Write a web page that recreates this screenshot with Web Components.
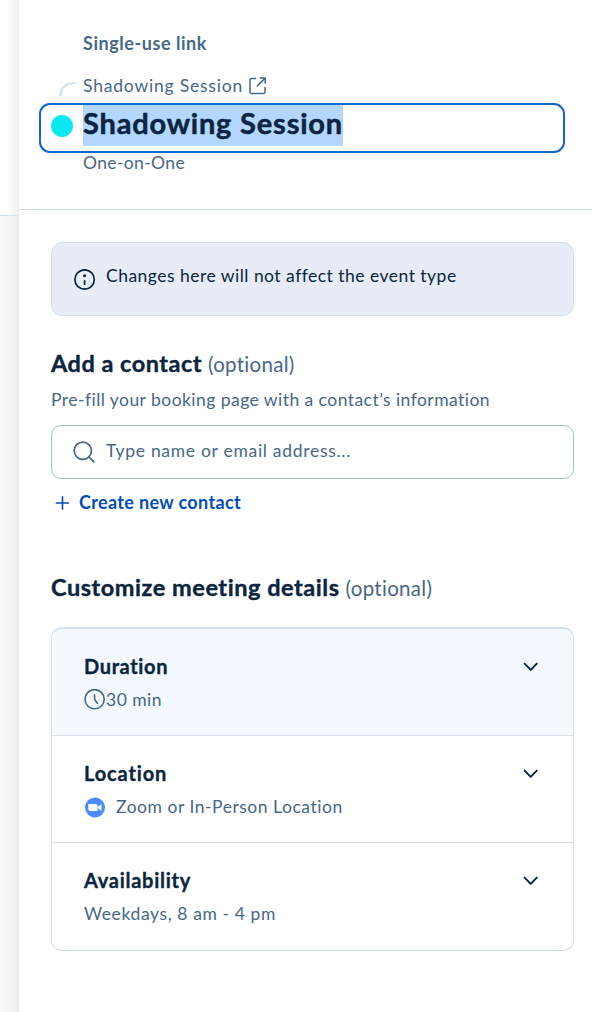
<!DOCTYPE html>
<html lang="en">
<head>
<meta charset="utf-8">
<title>Single-use link</title>
<style>
  body {
    margin: 0;
    background: #fff;
    color: #0b2540;
    font-family: Lato, "Open Sans", "Liberation Sans", sans-serif;
    overflow: hidden;
  }
</style>
</head>
<body>
<share-panel>
  <link-header slot="header" name="Shadowing Session"></link-header>
  <info-banner><fit-text w="350">Changes here will not affect the event type</fit-text></info-banner>
  <section-title style="margin-top:32px"><fit-text w="151">Add a contact</fit-text><fit-text slot="note" w="87">(optional)</fit-text></section-title>
  <contact-search></contact-search>
  <section-title style="margin-top:58px"><fit-text w="289">Customize meeting details</fit-text><fit-text slot="note" w="87">(optional)</fit-text></section-title>
  <detail-list>
    <detail-row active>
      <fit-text slot="title" w="84.5">Duration</fit-text>
      <ui-icon slot="icon" name="clock"></ui-icon>
      <fit-text w="56">30 min</fit-text>
    </detail-row>
    <detail-row>
      <fit-text slot="title" w="83.5">Location</fit-text>
      <ui-icon slot="icon" name="zoom" style="margin-right:10px"></ui-icon>
      <fit-text w="227">Zoom or In-Person Location</fit-text>
    </detail-row>
    <detail-row>
      <fit-text slot="title" w="107">Availability</fit-text>
      <fit-text w="192">Weekdays, 8 am - 4 pm</fit-text>
    </detail-row>
  </detail-list>
</share-panel>

<script>
const icons = {
  external: `<svg width="18" height="18" viewBox="0 0 18 18" fill="none" stroke="#476788" stroke-width="1.5" stroke-linecap="round" stroke-linejoin="round"><path d="M6.6 1.4H2.6A1.6 1.6 0 0 0 1 3V15A1.6 1.6 0 0 0 2.6 16.6H14.4A1.6 1.6 0 0 0 16 15V10.6M8.4 8.9 16 1.3M11.2 1H16.2V6"/></svg>`,
  info: `<svg width="22" height="22" viewBox="0 0 22 22" fill="none" stroke="#0b2540" stroke-width="1.7" stroke-linecap="round"><circle cx="10.6" cy="10.5" r="9.7"/><path d="M10.6 11.9V15.2"/><circle cx="10.6" cy="6.8" r="1.5" fill="#0b2540" stroke="none"/></svg>`,
  search: `<svg width="22" height="22" viewBox="0 0 22 22" fill="none" stroke="#476788" stroke-width="1.7" stroke-linecap="round"><circle cx="9.8" cy="9.8" r="8.6"/><path d="M16 16 20.8 20.8"/></svg>`,
  plus: `<svg width="14" height="14" viewBox="0 0 14 14" fill="none" stroke="#004eba" stroke-width="1.6" stroke-linecap="round"><path d="M7.5 .9V13.1M1.3 7H13.4"/></svg>`,
  clock: `<svg width="22" height="22" viewBox="0 0 22 22" fill="none" stroke="#476788" stroke-width="1.6" stroke-linecap="round" stroke-linejoin="round"><circle cx="10.6" cy="10.2" r="9.6"/><path d="M10.6 6V10.4L13.6 14.4"/></svg>`,
  zoom: `<svg width="22" height="22" viewBox="0 0 22 22"><circle cx="11" cy="11.5" r="10" fill="#4a8cff"/><path fill="#fff" d="M4.3 8H11.6A2 2 0 0 1 13.6 10V15H6.3A2 2 0 0 1 4.3 13ZM14.2 10.4 17.5 8V15L14.2 12.6Z"/></svg>`,
  chevron: `<svg width="16" height="10" viewBox="0 0 16 10" fill="none" stroke="#0b2540" stroke-width="1.9" stroke-linecap="round" stroke-linejoin="round"><path d="M2.6 1.6 8.7 7.9 14.8 1.6"/></svg>`,
};

// Shared base: clones a template string into an open shadow root
function define(name, html, setup) {
  const template = document.createElement('template');
  template.innerHTML = html;
  customElements.define(name, class extends HTMLElement {
    constructor() {
      super();
      this.attachShadow({ mode: 'open' }).appendChild(template.content.cloneNode(true));
    }
    connectedCallback() { if (setup) setup(this, this.shadowRoot); }
  });
}

define('ui-icon', `
  <style>
    :host { display: inline-flex; flex: none; }
    svg { display: block; }
  </style>
  <span></span>
`, (el, root) => { root.querySelector('span').innerHTML = icons[el.getAttribute('name')]; });

// Tracks a single line of text so it runs to the given width
define('fit-text', `
  <style>:host { display: inline-block; white-space: nowrap; }</style>
  <slot></slot>
`, (el) => {
  const w = Number(el.getAttribute('w'));
  requestAnimationFrame(() => {
    const gap = (w - el.getBoundingClientRect().width) / el.textContent.length;
    el.style.letterSpacing = gap.toFixed(3) + 'px';
  });
});

define('share-panel', `
  <style>
    :host { display: flex; height: 1012px; }
    .page { width: 19px; flex: none; display: flex; flex-direction: column; }
    .page div { flex: 1; background: linear-gradient(90deg, #f8f8f9, #f5f5f5 12px, #ebebeb); }
    .page div:first-child { flex: none; height: 216px; box-sizing: border-box; border-bottom: 1px solid #d4e0ed; background: linear-gradient(90deg, #fefefe 0 8px, #fafafa 10px, #f1f1f1 19px); }
    .panel { flex: 1; background: #fff; }
    .body { padding: 32px 18px 0 32px; }
  </style>
  <div class="page"><div></div><div></div></div>
  <div class="panel">
    <slot name="header"></slot>
    <div class="body"><slot></slot></div>
  </div>
`);

define('link-header', `
  <style>
    :host { display: block; position: relative; height: 210px; box-sizing: border-box; padding: 31px 27px 0 64px; border-bottom: 1px solid #d4e0ed; color: #476788; font-size: 17.5px; line-height: 24px; }
    .kind { font-size: 18px; font-weight: 700; }
    .parent { display: flex; align-items: center; gap: 6px; margin-top: 19px; }
    .field { display: flex; align-items: flex-start; margin: 5px 0 0 -44px; height: 50px; box-sizing: border-box; border: 2px solid #1068d0; border-radius: 11px; }
    .dot { width: 22px; height: 22px; margin: 10px 10px 0; border-radius: 50%; background: #0ae8f0; }
    .name { height: 41px; line-height: 36px; background: #b3d7ff; color: #0b2540; font-size: 29px; font-weight: 700; -webkit-text-stroke: .5px #0b2540; }
    .type { margin-top: -2px; }
    .hook { position: absolute; left: 40px; top: 81px; }
  </style>
  <div class="kind"><fit-text w="124">Single-use link</fit-text></div>
  <div class="parent"><fit-text w="160">Shadowing Session</fit-text><ui-icon name="external"></ui-icon></div>
  <div class="field"><span class="dot"></span><span class="name"><fit-text w="260"></fit-text></span></div>
  <div class="type"><fit-text w="102">One-on-One</fit-text></div>
  <svg class="hook" width="18" height="16" fill="none" stroke="#d4e0ed" stroke-width="2.2"><path d="M1.5 15.5C1.5 7 6 2 16.5 2"/></svg>
`, (el, root) => { root.querySelector('.name fit-text').textContent = el.getAttribute('name'); });

define('info-banner', `
  <style>
    :host { display: flex; align-items: flex-start; gap: 10px; height: 74px; box-sizing: border-box; padding: 21px 22px; border: 1px solid #d4e0ed; border-radius: 11px; background: #e7ecf6; font-size: 17.5px; line-height: 24px; }
    ui-icon { margin-top: 5px; }
  </style>
  <ui-icon name="info"></ui-icon>
  <slot></slot>
`);

define('section-title', `
  <style>
    :host { display: flex; align-items: baseline; gap: 6px; font-size: 23.5px; font-weight: 700; line-height: 30px; -webkit-text-stroke: .4px #0b2540; }
    .note { color: #476788; font-size: 20.5px; font-weight: 400; -webkit-text-stroke: 0; }
  </style>
  <slot></slot><span class="note"><slot name="note"></slot></span>
`);

define('contact-search', `
  <style>
    :host { display: block; color: #476788; font-size: 17.5px; line-height: 24px; }
    .hint { margin-top: 9px; }
    .box { display: flex; align-items: flex-start; gap: 11px; margin-top: 13px; height: 54px; box-sizing: border-box; padding: 13px 21px; border: 1px solid #a6bbd1; border-radius: 10px; }
    .box ui-icon { margin-top: 2px; }
    .create { display: flex; align-items: center; gap: 10px; margin: 11px 0 0 4px; color: #004eba; font-size: 18px; font-weight: 700; }
    .create ui-icon { margin-top: 2px; }
  </style>
  <div class="hint"><fit-text w="439">Pre-fill your booking page with a contact’s information</fit-text></div>
  <div class="box"><ui-icon name="search"></ui-icon><fit-text w="245">Type name or email address...</fit-text></div>
  <div class="create"><ui-icon name="plus"></ui-icon><fit-text w="162">Create new contact</fit-text></div>
`);

define('detail-list', `
  <style>
    :host { display: block; margin-top: 24px; border: 1px solid #d4e0ed; border-top-width: 2px; border-radius: 11px; overflow: hidden; }
  </style>
  <slot></slot>
`);

define('detail-row', `
  <style>
    :host { display: flex; justify-content: space-between; height: 107px; box-sizing: border-box; padding: 23px 35px 0 32px; }
    :host(:not(:first-child)) { border-top: 1px solid #d4e0ed; }
    :host(:last-child) { height: 108px; }
    :host([active]) { height: 106px; background: #f4f8ff; }
    .title { font-size: 20px; font-weight: 700; line-height: 28px; -webkit-text-stroke: .35px #0b2540; }
    .value { display: flex; align-items: center; margin-top: 8px; color: #476788; font-size: 17.5px; line-height: 24px; }
    .chevron { margin-top: 10px; }
  </style>
  <div>
    <div class="title"><slot name="title"></slot></div>
    <div class="value"><slot name="icon"></slot><slot></slot></div>
  </div>
  <ui-icon class="chevron" name="chevron"></ui-icon>
`);
</script>
</body>
</html>
